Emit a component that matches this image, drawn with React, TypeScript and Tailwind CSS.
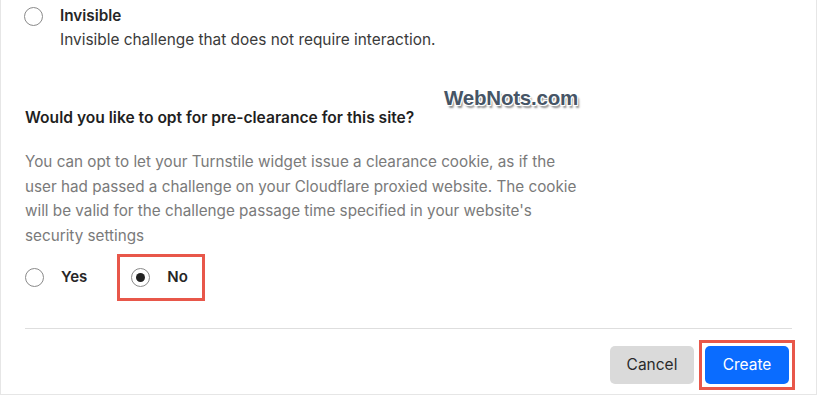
import { Fragment } from 'react';

const font = { fontFamily: 'Inter, "Liberation Sans", Arial, sans-serif' };

function Radio({ checked = false }: { checked?: boolean }) {
  return (
    <span className="flex h-[19px] w-[19px] shrink-0 items-center justify-center rounded-full border border-[#8a8a8a] bg-white">
      {checked && <span className="h-[9px] w-[9px] rounded-full bg-[#222]" />}
    </span>
  );
}

const paragraph = [
  'You can opt to let your Turnstile widget issue a clearance cookie, as if the',
  'user had passed a challenge on your Cloudflare proxied website. The cookie',
  "will be valid for the challenge passage time specified in your website's",
  'security settings',
];

export default function App() {
  return (
    <div
      className="relative h-[395px] w-[817px] overflow-hidden border-x border-b border-[#e6e6e6] bg-white"
      style={font}
    >
      {/* Invisible option */}
      <div className="flex gap-[17px] pl-[23px] pt-[7px]">
        <Radio />
        <div className="-mt-[1px]">
          <div className="text-[15.3px] font-semibold leading-[20px] text-[#262626]">Invisible</div>
          <div className="mt-[4px] text-[15.4px] leading-[20px] text-[#3a3a3a]">
            Invisible challenge that does not require interaction.
          </div>
        </div>
      </div>

      {/* watermark */}
      <div
        className="absolute left-[443px] top-[83px] text-[20.5px] font-bold tracking-[-0.2px] text-[#465566]"
        style={{
          fontFamily: '"Liberation Sans", Arial, sans-serif',
          textShadow:
            '1px 1px 0 #fff, -1px -1px 0 #fff, 1px -1px 0 #fff, -1px 1px 0 #fff, 2px 3px 2px rgba(0,0,0,0.45)',
        }}
      >
        WebNots.com
      </div>

      {/* Pre-clearance */}
      <div className="pl-[24px] pt-[58px]">
        <h2 className="text-[15.6px] font-semibold leading-[20px] text-[#1f1f1f]">
          Would you like to opt for pre-clearance for this site?
        </h2>
        <p className="mt-[22px] text-[15.25px] leading-[24.5px] text-[#7a7a7a]">
          {paragraph.map((line, i) => (
            <Fragment key={i}>
              {line}
              {i < paragraph.length - 1 && <br />}
            </Fragment>
          ))}
        </p>

        <div className="mt-[6px] flex items-center">
          <div className="flex items-center gap-[17px] py-[12px]">
            <Radio />
            <span className="text-[15px] font-semibold text-[#262626]">Yes</span>
          </div>
          <div className="ml-[30px] flex items-center gap-[17px] border-[3px] border-[#e8574a] py-[9px] pl-[11px] pr-[14px]">
            <Radio checked />
            <span className="text-[15px] font-semibold text-[#262626]">No</span>
          </div>
        </div>
      </div>

      {/* footer */}
      <div className="mx-[24px] mt-[27px] border-t border-[#dedede]" />
      <div className="flex justify-end gap-[5px] pr-[21px] pt-[11px]">
        <button className="mt-[6px] h-[38px] w-[84px] rounded-[5px] bg-[#dadada] text-[15.5px] text-[#2a2a2a]">
          Cancel
        </button>
        <div className="border-[3px] border-[#e8574a] p-[3px]">
          <button className="h-[38px] w-[84px] rounded-[5px] bg-[#0a6cff] text-[15.5px] text-white">
            Create
          </button>
        </div>
      </div>
    </div>
  );
}
